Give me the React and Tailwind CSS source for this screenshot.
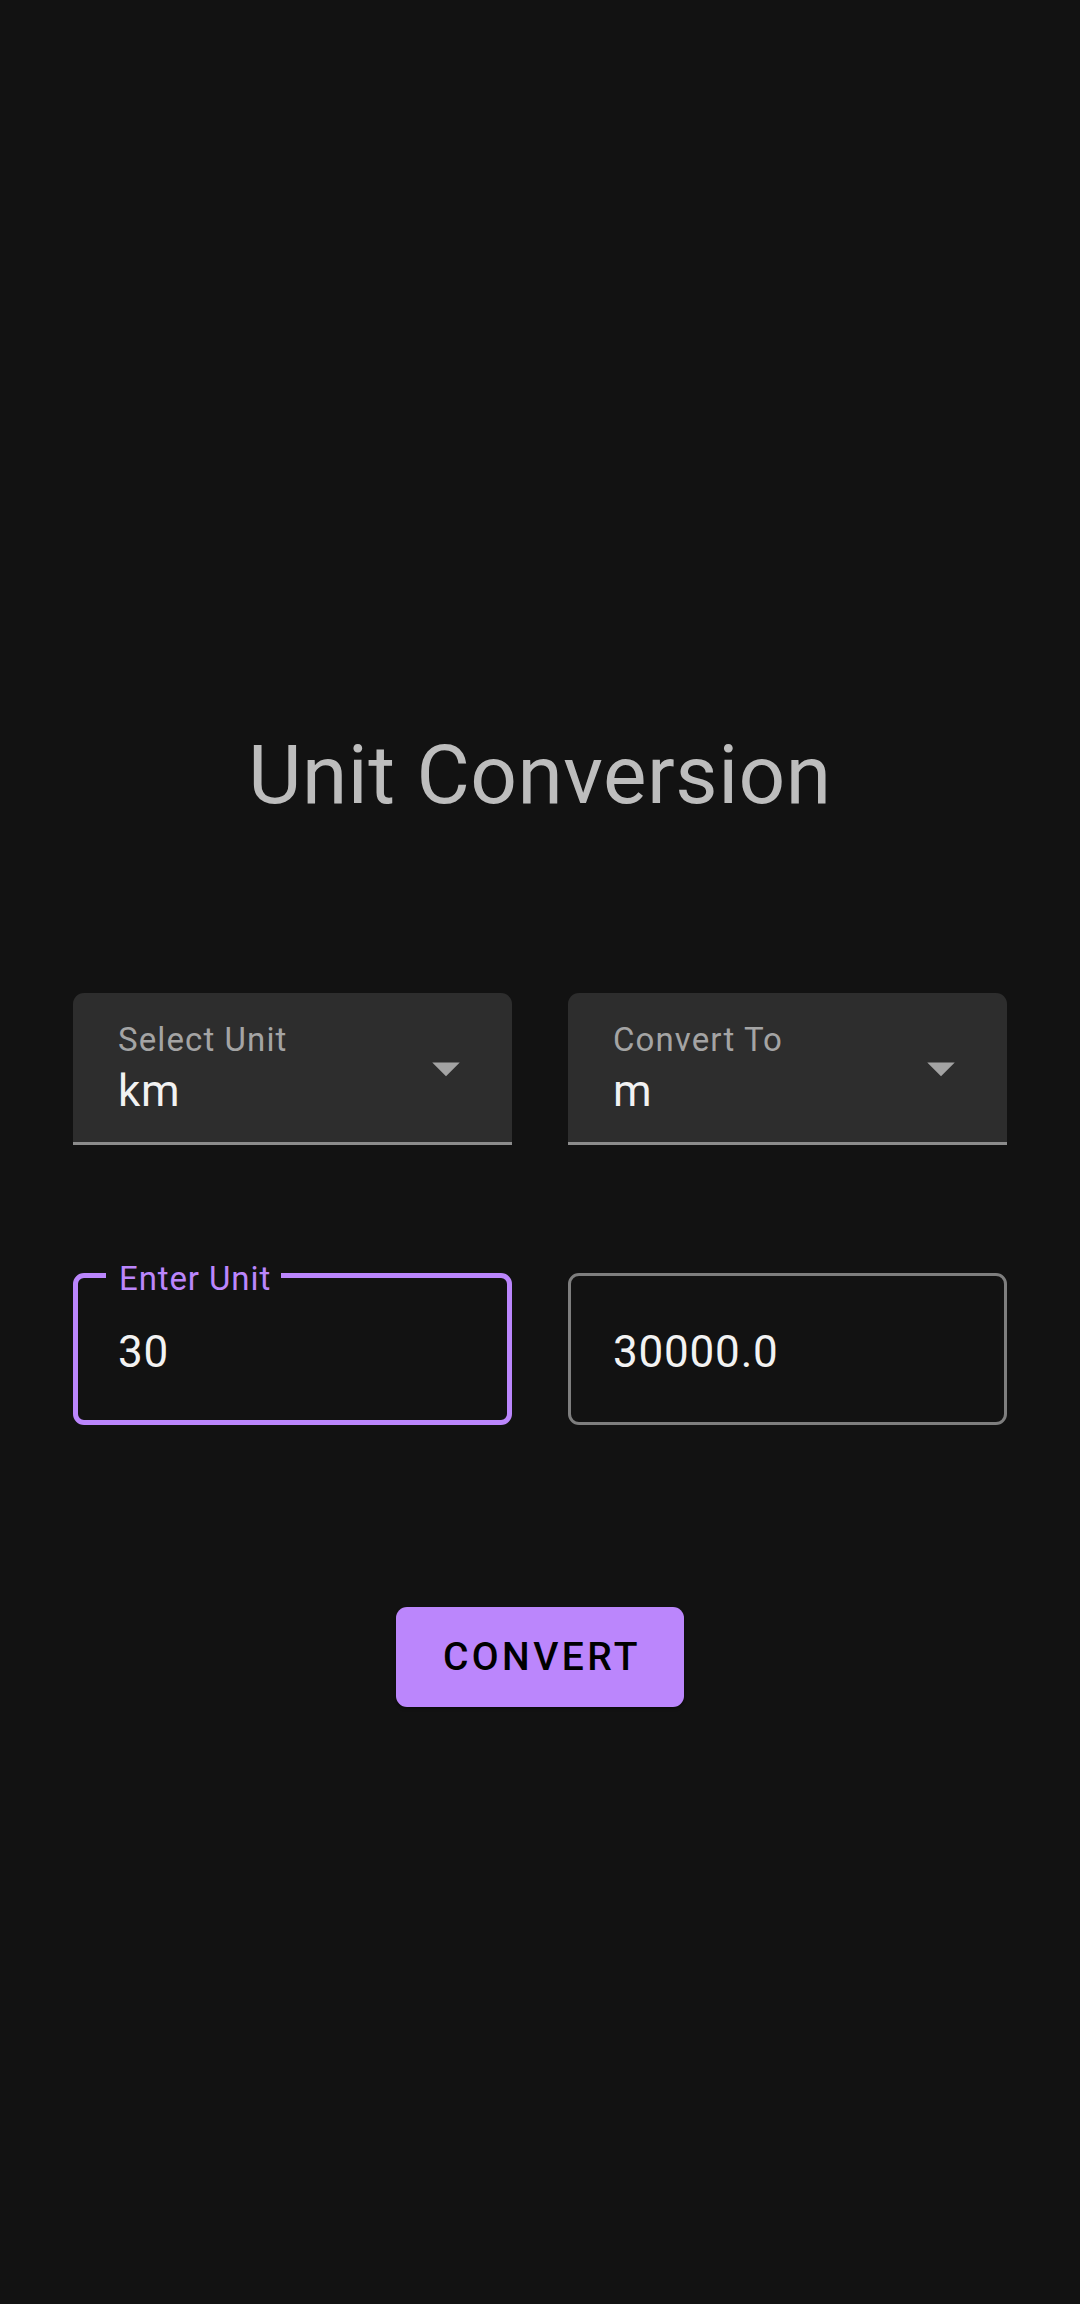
import { useState } from "react";

function ArrowDrop() {
  return (
    <svg className="h-[66px] w-[66px] shrink-0" viewBox="0 0 24 24" fill="#a3a3a3">
      <path d="M7 10l5 5 5-5z" />
    </svg>
  );
}

function SelectField({ label, value }) {
  return (
    <div className="flex h-[152px] w-[439px] items-center justify-between rounded-t-[11px] border-b-[3px] border-[#8c8c8c] bg-[#2d2d2d] pl-[45px] pr-[33px]">
      <div className="flex flex-col">
        <span className="text-[33px] leading-[33px] tracking-[1.1px] text-[#a4a4a4]">{label}</span>
        <span className="mt-[13px] text-[44px] leading-[44px] tracking-[0.8px] text-[#f2f2f2]">{value}</span>
      </div>
      <ArrowDrop />
    </div>
  );
}

export default function App() {
  const [amount, setAmount] = useState("30");
  const result = "30000.0";

  return (
    <div className="flex h-[2304px] w-[1080px] flex-col items-center bg-[#121212] font-['Roboto',sans-serif]">
      <h1 className="mt-[734px] text-[82px] font-normal leading-[82px] tracking-[0.5px] text-[#bdbdbd]">Unit Conversion</h1>

      <div className="mt-[177px] flex w-full justify-between px-[73px]">
        <SelectField label="Select Unit" value="km" />
        <SelectField label="Convert To" value="m" />
      </div>

      <div className="mt-[128px] flex w-full justify-between px-[73px]">
        <div className="relative flex h-[152px] w-[439px] items-center rounded-[11px] border-[5px] border-[#bb86fc] pl-[40px] pt-[6px]">
          <span className="absolute -top-[16px] left-[28px] bg-[#121212] pl-[13px] pr-[10px] text-[33px] leading-[33px] tracking-[0.9px] text-[#bb86fc]">
            Enter Unit
          </span>
          <input
            className="w-full bg-transparent text-[44px] leading-[44px] tracking-[0.8px] text-[#f2f2f2] outline-none"
            value={amount}
            onChange={(e) => setAmount(e.target.value)}
          />
        </div>
        <div className="flex h-[152px] w-[439px] items-center rounded-[11px] border-[3px] border-[#7e7e7e] pl-[42px] pt-[6px]">
          <span className="text-[44px] leading-[44px] tracking-[0.8px] text-[#f2f2f2]">{result}</span>
        </div>
      </div>

      <button className="mt-[182px] flex h-[100px] w-[288px] items-center justify-center rounded-[11px] bg-[#bb86fc] pl-[4px] text-[39px] font-medium leading-[39px] tracking-[3.4px] text-black shadow-[0_2px_3px_rgba(0,0,0,0.4)]">
        CONVERT
      </button>
    </div>
  );
}
